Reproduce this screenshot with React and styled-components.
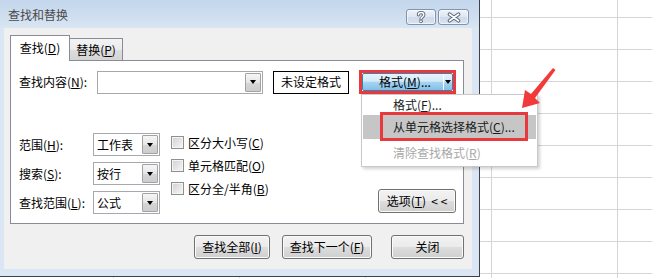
import React from 'react';
import styled, { createGlobalStyle } from 'styled-components';

const GlobalStyle = createGlobalStyle`
  html, body {
    margin: 0;
    padding: 0;
    background: #fff;
    overflow: hidden;
  }
  * {
    box-sizing: border-box;
  }
`;

const App = () => {
  return (
    <Page>
      <GlobalStyle />
      <Dialog>
        <TitleBar>
          <Title>查找和替换</Title>
          <SysButtons>
            <SysBtn $w={30}>
              <svg width="12" height="12" viewBox="-6 -6 12 12">
                <g fill="none" strokeLinecap="round">
                  <path d="M-2.6 -2.2 C-2.6 -5.2 2.8 -5.2 2.8 -2.2 C2.8 -0.2 0 0 0 2" stroke="#56667c" strokeWidth="3.2" />
                  <path d="M-2.6 -2.2 C-2.6 -5.2 2.8 -5.2 2.8 -2.2 C2.8 -0.2 0 0 0 2" stroke="#fff" strokeWidth="1.4" />
                  <circle cx="0" cy="4.3" r="1.5" fill="#fff" stroke="#56667c" strokeWidth="0.9" />
                </g>
              </svg>
            </SysBtn>
            <SysBtn $w={31}>
              <svg width="14" height="11" viewBox="-7 -5.5 14 11">
                <g strokeLinecap="round">
                  <path d="M-4.5 -3.3 L4.5 3.3 M4.5 -3.3 L-4.5 3.3" stroke="#56667c" strokeWidth="3.6" />
                  <path d="M-4.5 -3.3 L4.5 3.3 M4.5 -3.3 L-4.5 3.3" stroke="#fff" strokeWidth="1.7" />
                </g>
              </svg>
            </SysBtn>
          </SysButtons>
        </TitleBar>

        <Body>
          <TabRow>
            <Tab $active>查找(<U>D</U>)</Tab>
            <Tab>替换(<U>P</U>)</Tab>
          </TabRow>

          <Panel>
            <FindRow>
              <Label $w={78}>查找内容(<U>N</U>):</Label>
              <Combo $w={166}>
                <ComboText />
                <DropBtn><Caret /></DropBtn>
              </Combo>
              <FormatPreview>未设定格式</FormatPreview>
              <Highlight>
                <SplitButton>
                  <SplitMain>格式(<U>M</U>)...</SplitMain>
                  <SplitArrow><Caret /></SplitArrow>
                </SplitButton>
                <Menu>
                  <MenuItem $h={20}>格式(<U>F</U>)...</MenuItem>
                  <MenuItem $h={24} $hover>
                    从单元格选择格式(<U>C</U>)...
                    <MarkBox />
                  </MenuItem>
                  <MenuItem $h={27} $disabled>清除查找格式(<U>R</U>)</MenuItem>
                </Menu>
              </Highlight>
            </FindRow>

            <OptionsArea>
              <SelectGrid>
                <Label>范围(<U>H</U>):</Label>
                <Combo $w={67}>
                  <ComboText>工作表</ComboText>
                  <DropBtn><Caret /></DropBtn>
                </Combo>
                <Label>搜索(<U>S</U>):</Label>
                <Combo $w={67}>
                  <ComboText>按行</ComboText>
                  <DropBtn><Caret /></DropBtn>
                </Combo>
                <Label>查找范围(<U>L</U>):</Label>
                <Combo $w={67}>
                  <ComboText>公式</ComboText>
                  <DropBtn><Caret /></DropBtn>
                </Combo>
              </SelectGrid>

              <CheckList>
                <CheckRow><Box />区分大小写(<U>C</U>)</CheckRow>
                <CheckRow><Box />单元格匹配(<U>O</U>)</CheckRow>
                <CheckRow><Box />区分全/半角(<U>B</U>)</CheckRow>
              </CheckList>

              <OptionsButton>选项(<U>T</U>)&nbsp;&nbsp;&lt; &lt;</OptionsButton>
            </OptionsArea>
          </Panel>

          <Footer>
            <Button $w={76}>查找全部(<U>I</U>)</Button>
            <Button $w={90}>查找下一个(<U>F</U>)</Button>
            <Button $w={73} $gap={19}>关闭</Button>
          </Footer>
        </Body>
      </Dialog>

      <Arrow width="44" height="48" viewBox="0 0 44 48">
        <polygon points="4,44 7,26 13,30 35,4 37.5,6 17,34 22,39" fill="#f23a3a" />
      </Arrow>
    </Page>
  );
};

const Page = styled.div`
  position: relative;
  width: 652px;
  height: 278px;
  overflow: hidden;
  background-color: #fff;
  background-image:
    linear-gradient(to right, #d5d5d5 1px, transparent 1px),
    linear-gradient(to bottom, #d5d5d5 1px, transparent 1px);
  background-size: 126px 100%, 100% 32px;
  background-position: 113px 0, 0 17px;
  font-family: "Noto Sans CJK SC", "Liberation Sans", sans-serif;
  font-size: 12px;
  color: #000;
`;

const Dialog = styled.div`
  width: 480px;
  height: 277px;
  display: flex;
  flex-direction: column;
  background: #dae6f3;
  border-right: 1px solid #3e4146;
  border-bottom: 1px solid #3e4146;
`;

const TitleBar = styled.div`
  height: 28px;
  flex-shrink: 0;
  display: flex;
  align-items: center;
  padding: 0 10px 0 8px;
  background: linear-gradient(#c3d6ec, #cfdff0 60%, #d9e5f2);
`;

const Title = styled.div`
  font-size: 12px;
  line-height: 14px;
  color: #4a4a4a;
  margin-top: 2px;
`;

const SysButtons = styled.div`
  margin-left: auto;
  align-self: flex-start;
  margin-top: 9px;
  display: flex;
  gap: 2px;
`;

const SysBtn = styled.div`
  width: ${({ $w }) => $w}px;
  height: 16px;
  border: 1px solid #8193ad;
  border-radius: 3px;
  background: linear-gradient(#eef3f9, #dde6f1 50%, #cfdbea 51%, #d8e3f0);
  box-shadow: inset 0 0 0 1px rgba(255, 255, 255, 0.6);
  display: flex;
  align-items: center;
  justify-content: center;
`;

const Body = styled.div`
  flex: 1;
  margin: 0 7px 7px 4px;
  padding: 7px 8px 0 6px;
  background: #f0f0f0;
  display: flex;
  flex-direction: column;
`;

const TabRow = styled.div`
  display: flex;
  align-items: flex-end;
  height: 26px;
  margin-bottom: -1px;
  position: relative;
  z-index: 1;
`;

const Tab = styled.div`
  display: flex;
  align-items: center;
  justify-content: center;
  line-height: 14px;
  border: 1px solid #898c95;
  border-bottom: none;
  ${({ $active }) =>
    $active
      ? `
    width: 60px;
    height: 26px;
    background: #fff;
    padding-bottom: 1px;
  `
      : `
    width: 53px;
    height: 22px;
    margin-bottom: 1px;
    border-left: none;
    padding-top: 1px;
    background: linear-gradient(#f3f3f3, #ebebeb 50%, #dedede 51%, #d4d4d4);
  `}
`;

const Panel = styled.div`
  height: 164px;
  background: #fff;
  border: 1px solid #898c95;
  padding: 9px 7px 9px 8px;
  display: flex;
  flex-direction: column;
`;

const FindRow = styled.div`
  display: flex;
  align-items: center;
  height: 24px;
`;

const Label = styled.div`
  width: ${({ $w }) => ($w ? `${$w}px` : 'auto')};
  line-height: 14px;
  white-space: nowrap;
`;

const U = styled.span`
  text-decoration: underline;
  text-underline-offset: 1px;
`;

const Combo = styled.div`
  width: ${({ $w }) => $w}px;
  height: 23px;
  border: 1px solid #a6a8ae;
  background: #fff;
  display: flex;
  align-items: stretch;
`;

const ComboText = styled.div`
  flex: 1;
  padding-left: 3px;
  display: flex;
  align-items: center;
  line-height: 14px;
`;

const DropBtn = styled.div`
  width: 16px;
  margin: 1px;
  border: 1px solid #a2a2a2;
  border-radius: 1px;
  background: linear-gradient(#f6f6f6, #e6e6e6 50%, #d6d6d6 51%, #cdcdcd);
  display: flex;
  align-items: center;
  justify-content: center;
`;

const Caret = styled.span`
  width: 0;
  height: 0;
  border-left: 3.5px solid transparent;
  border-right: 3.5px solid transparent;
  border-top: 4px solid #000;
`;

const FormatPreview = styled.div`
  width: 76px;
  height: 23px;
  margin-left: 10px;
  border: 1px solid #000;
  background: #fff;
  display: flex;
  align-items: center;
  justify-content: center;
  line-height: 14px;
`;

const Highlight = styled.div`
  position: relative;
  margin-left: 10px;
  border: 3px solid #e8393d;
`;

const SplitButton = styled.div`
  width: 91px;
  height: 18px;
  display: flex;
  border: 1px solid #3c7fb1;
  border-radius: 2px;
  background: linear-gradient(#e6f3fc, #d2eaf9 45%, #a6d4f1 52%, #7fc0ea);
`;

const SplitMain = styled.div`
  flex: 1;
  display: flex;
  align-items: center;
  justify-content: center;
  line-height: 14px;
  padding-left: 4px;
  border-right: 1px solid #fff;
`;

const SplitArrow = styled.div`
  width: 8px;
  display: flex;
  align-items: center;
  justify-content: center;
`;

const Menu = styled.div`
  position: absolute;
  top: calc(100% + 3px);
  left: -1px;
  width: 177px;
  background: #fff;
  border: 1px solid #c9c9c9;
  box-shadow: 2px 2px 3px rgba(0, 0, 0, 0.18);
  z-index: 5;
`;

const MenuItem = styled.div`
  position: relative;
  height: ${({ $h }) => $h}px;
  margin: 0 1px;
  padding-left: 30px;
  display: flex;
  align-items: center;
  line-height: 14px;
  white-space: nowrap;
  background: ${({ $hover }) => ($hover ? '#c6c6c6' : 'transparent')};
  color: ${({ $disabled }) => ($disabled ? '#a8a8a8' : '#1a1a1a')};
`;

const MarkBox = styled.div`
  position: absolute;
  left: 17px;
  top: -3px;
  width: 148px;
  height: 29px;
  border: 3px solid #e8393d;
`;

const OptionsArea = styled.div`
  display: flex;
  align-items: flex-start;
  margin-top: 39px;
`;

const SelectGrid = styled.div`
  display: grid;
  grid-template-columns: 74px 67px;
  grid-auto-rows: 23px;
  row-gap: 6px;
  align-items: center;
`;

const CheckList = styled.div`
  display: flex;
  flex-direction: column;
  margin-left: 11px;
  margin-top: -2px;
`;

const CheckRow = styled.div`
  height: 23px;
  display: flex;
  align-items: center;
  line-height: 14px;
  white-space: nowrap;
`;

const Box = styled.span`
  width: 13px;
  height: 13px;
  margin-right: 4px;
  border: 1px solid #8e8f8f;
  background: linear-gradient(135deg, #d0d0d0, #f7f7f7);
  box-shadow: inset 0 0 0 1px #f4f4f4;
`;

const Button = styled.div`
  width: ${({ $w }) => $w}px;
  height: 24px;
  margin-left: ${({ $gap }) => ($gap ? `${$gap}px` : '12px')};
  border: 1px solid #707070;
  border-radius: 3px;
  background: linear-gradient(#f2f2f2, #ebebeb 50%, #dddddd 51%, #cfcfcf);
  box-shadow: inset 0 0 0 1px #fbfbfb;
  display: flex;
  align-items: center;
  justify-content: center;
  line-height: 14px;
  white-space: nowrap;
`;

const OptionsButton = styled(Button)`
  width: 78px;
  margin-left: auto;
  margin-top: 56px;
`;

const Footer = styled.div`
  display: flex;
  justify-content: flex-end;
  margin-top: 11px;
`;

const Arrow = styled.svg`
  position: absolute;
  left: 518px;
  top: 64px;
  z-index: 10;
`;

export default App;
